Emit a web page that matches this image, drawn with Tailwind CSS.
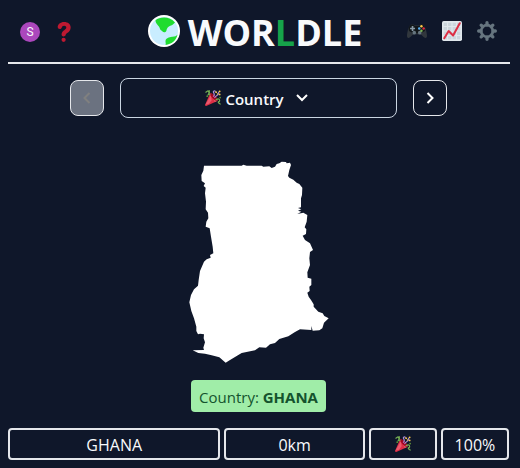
<!DOCTYPE html>
<html lang="en">
<head>
<meta charset="utf-8">
<meta name="viewport" content="width=device-width, initial-scale=1">
<title>Worldle</title>
<script src="https://cdn.jsdelivr.net/npm/@tailwindcss/browser@4"></script>
</head>
<body class="min-h-screen bg-[#0f172a] pr-2.5 pl-2 font-['Open_Sans','Noto_Sans',sans-serif] text-base text-slate-50">
<svg class="hidden" aria-hidden="true">
  <symbol id="popper" viewBox="0 0 36 36">
    <path fill="#DD2E44" d="M11.6 7.6c-.1.1-.2.3-.3.5L.2 33.200c-.5 1.200 1.400 3.100 2.700 2.600l25-11.200c1.300-1 .2-5.400-4.900-10.500-5.200-5.200-10.200-7.700-11.400-6.500z"/>
    <path fill="#EA596E" d="M13 12 1 33l8-2 6-8zM15 10l12 14-5 3z"/>
    <path fill="#A0041E" d="M22.600 13.300c4.300 4.300 6.500 8.900 5.100 10.500-1.500 1.500-6-1-10.500-5.400-4.300-4.300-6.500-8.900-5-10.400 1.500-1.400 6.100.900 10.400 5.300z"/>
    <path fill="none" stroke="#AA8DD8" stroke-width="2.600" stroke-linecap="round" d="M19 14c4-3 1-6 0-9s3-4 4-2M22 17c3-5 4-4 7-6 2-2 0-4 2-6"/>
    <path fill="none" stroke="#77B255" stroke-width="2.600" stroke-linecap="round" d="M11 10C5 7 12 5 9 1M2 5l4-3 4 4-3 5M25 22c5-4 8-1 8 2s-4 1-3 4 3 0 4 4"/>
    <g fill="#FFCC4D"><circle cx="25" cy="5" r="2"/><circle cx="33" cy="10" r="2"/><circle cx="28" cy="9" r="1.500"/><circle cx="33" cy="3" r="2"/></g>
    <g fill="#5C913B"><circle cx="5" cy="14" r="2"/><circle cx="34" cy="17" r="2"/></g>
  </symbol>
</svg>

<header class="grid h-16 grid-cols-[1fr_auto_1fr] items-center border-b-2 border-gray-200 px-3">
  <div class="flex items-center gap-3.5 pt-0.5">
    <button class="size-5 rounded-full bg-[#ab47bc] text-center text-xs leading-5 font-[Roboto,sans-serif]" aria-label="Account S">S</button>
    <button class="size-5" aria-label="Help">
      <svg class="size-5" viewBox="0 0 36 36"><path fill="#BE1931" d="M17 26c-2.200 0-3.400-1.200-3.400-3.300 0-4.900 2.700-6.400 5.300-8.400 2-1.500 3.200-2.400 3.200-4.300 0-2-1.500-3.300-3.800-3.300-3 0-3.700 1.500-4.500 3.500-.6 1.500-1.800 2.500-3.400 2.500-2.200 0-3.700-1.300-3.700-3.500C6.700 4.200 11.300 0 18.300 0 25.300 0 30 3.900 30 9.700c0 5-2.900 7.600-5.500 9.500-2 1.400-3.300 2-3.300 3.500 0 2-1.600 3.300-4.200 3.300z"/><circle cx="17.300" cy="32" r="3.800" fill="#BE1931"/></svg>
    </button>
  </div>
  <h1 class="flex items-center gap-2 pr-2 text-4xl font-bold">
    <svg class="size-8" viewBox="0 0 32 32" aria-hidden="true">
      <circle cx="16" cy="16" r="16" fill="#fff"/><circle cx="16" cy="16" r="14" fill="#c9edff"/>
      <path fill="#1fdc2f" d="M7.500 5.200C12 1.500 22 .9 27 7.500c-1.500 1.500-2.500 3-4.700 3.200-2 .8-3.500 2.300-4 5.300-.7 1.600-3 1.800-4 .2-1.100-1.100-2.300-1.300-2.500-3C11.500 11 7.300 9 7.500 5.200z"/>
      <path fill="#1fdc2f" d="M29.500 19.500c-1 1.700-3 2.300-5.500 2.200-3 .3-6 1.500-6.500 4-.3 1.600.8 2.700 0 4.200 6-.5 11-4.700 12-10.400z"/>
    </svg>
    <span class="pt-1">WOR<span class="text-[#16a34a]">L</span>DLE</span>
  </h1>
  <nav class="flex items-center justify-end gap-[15px] pr-px">
    <button aria-label="Other games">
      <svg class="size-5" viewBox="0 0 36 36">
        <path fill="#31373D" d="M6 7c-3 2-6 14-6 20 0 3 2 4 4 3 3-1 5-5 8-6h12c3 1 5 5 8 6 2 1 4 0 4-3 0-6-3-18-6-20-3-1-7-1-8 1h-8C13 6 9 6 6 7z"/>
        <path fill="#111619" d="M5 8c4-3 8-1 9 1h8c1-2 5-4 9-1 3 4 3 11-3 12-2 5-7 5-8 2h-4c-1 3-6 3-8-2C2 19 2 12 5 8z"/>
        <path fill="#8899A6" d="M8.500 9h3v3h3v3h-3v3h-3v-3h-3v-3h3z"/>
        <circle cx="13" cy="21" r="3.300" fill="#66757F"/><circle cx="23" cy="21" r="3.300" fill="#66757F"/>
        <circle cx="26" cy="9.500" r="2.200" fill="#FFCC4D"/><circle cx="22" cy="13.500" r="2.200" fill="#55ACEE"/><circle cx="30" cy="13.500" r="2.200" fill="#DD2E44"/><circle cx="26" cy="17.500" r="2.200" fill="#77B255"/>
      </svg>
    </button>
    <button aria-label="Statistics">
      <svg class="size-5" viewBox="0 0 36 36">
        <rect width="36" height="36" rx="3" fill="#E1E8ED"/>
        <path fill="#CCD6DD" d="M3 3h6v6H3zm8 0h6v6h-6zm8 0h6v6h-6zm8 0h6v6h-6zM3 11h6v6H3zm8 0h6v6h-6zm8 0h6v6h-6zm8 0h6v6h-6zM3 19h6v6H3zm8 0h6v6h-6zm8 0h6v6h-6zm8 0h6v6h-6zM3 27h6v6H3zm8 0h6v6h-6zm8 0h6v6h-6zm8 0h6v6h-6z"/>
        <path fill="none" stroke="#DD2E44" stroke-width="3.600" stroke-linecap="round" stroke-linejoin="round" d="m4 31 8-13 8 8L32 4"/>
      </svg>
    </button>
    <button aria-label="Settings">
      <svg class="size-5" viewBox="0 0 36 36" fill="none" stroke="#66757F">
        <circle cx="18" cy="18" r="10.500" stroke-width="5"/>
        <path stroke-width="6" stroke-linecap="round" d="M18 3V7m0 22v4M3 18H7m22 0h4M7.500 7.500l2.700 2.700m15.600 15.600 2.700 2.700M7.500 28.500l2.700-2.700m15.600-15.600 2.700-2.700"/>
      </svg>
    </button>
  </nav>
</header>

<main class="mr-px flex flex-col">
  <div class="mt-3.5 flex items-center justify-center gap-4">
    <button disabled class="flex h-9 w-[34px] items-center justify-center rounded-lg border border-gray-200 bg-[#6b7280]" aria-label="Previous round">
      <svg class="h-3 w-2" viewBox="0 0 8 12" fill="none" stroke="#80807f" stroke-width="2"><path d="M6.500 1 1.500 6l5 5"/></svg>
    </button>
    <div class="flex h-10 w-[55.2%] items-center justify-center rounded-lg border border-slate-300">
      <svg class="mr-1 size-4" aria-hidden="true"><use href="#popper"/></svg>
      <select id="round" aria-label="Round" class="field-sizing-content h-8 appearance-none bg-transparent pt-0.5 text-[15px] leading-7 font-semibold"><option>Country</option></select>
      <svg class="mr-1 ml-3 h-2 w-3" viewBox="0 0 12 8" fill="none" stroke="#fff" stroke-width="2" aria-hidden="true"><path d="m1 1 5 5 5-5"/></svg>
    </div>
    <button class="flex h-9 w-[34px] items-center justify-center rounded-lg border border-gray-200" aria-label="Next round">
      <svg class="h-3 w-2" viewBox="0 0 8 12" fill="none" stroke="#fff" stroke-width="2"><path d="m1.500 1 5 5-5 5"/></svg>
    </button>
  </div>

  <svg class="mt-[43px] w-[140px] self-center" viewBox="27 33 420 606" role="img" aria-label="Country outline">
    <path fill="#fff" d="M72 47H185L190 44 200 47H245L250 50 268 49 275 54 285 50 290 42 298 40 305 35 318 36 320 40 330 38 333 45 328 60 324 78 328 83 340 89 350 98 358 102 367 113 366 135 363 145V172L354 174 364 178 354 182 364 185 352 192 370 188 382 195 380 215 374 232 379 238 378 252 368 257 375 270 390 280 399 300 390 306 388 325 390 345 382 367 383 383 394 386V405L388 410 389 423 382 428 386 440 393 450 401 463V470L415 485 428 490 433 498 446 505 432 518 427 535 418 541 398 542 394 528V540L360 538 345 546 325 559 298 567 285 579 270 583 258 593 238 592 225 601 185 609 165 621 150 630 137 638 118 622 95 616 75 611 55 609 38 601 72 600 70 593 75 577 71 565 72 553 60 551 54 553 49 543V530L42 505 34 483 28 457 33 435 42 418 54 407 56 390 60 363 72 335 80 328 92 323 90 315 100 310 98 290 93 260 89 235 77 230 79 215 85 205 84 188 77 178 78 155 75 130 77 113 71 108 75 100 65 93 64 75 70 62Z"/>
  </svg>

  <p class="mt-[17px] self-center rounded bg-[#a0eda8] px-2 pt-[5px] pb-[3px] text-[15px] leading-6 text-[#14532d]">Country: <b class="font-bold">GHANA</b></p>

  <div class="mt-4 grid grid-cols-7 gap-1 text-center leading-[30px] *:h-8 *:rounded *:border-2 *:border-gray-200">
    <div class="col-span-3">GHANA</div>
    <div class="col-span-2">0km</div>
    <div class="flex items-center justify-center"><svg class="size-4" role="img" aria-label="Correct"><use href="#popper"/></svg></div>
    <div>100%</div>
  </div>
</main>
</body>
</html>
